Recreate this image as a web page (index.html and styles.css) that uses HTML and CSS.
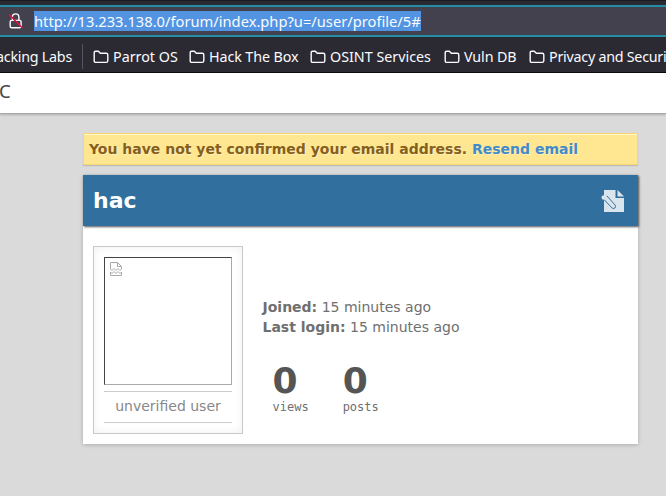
FILE: index.html
```
<!DOCTYPE html>
<html lang="en">
<head>
<meta charset="utf-8">
<title>hac</title>
<link rel="stylesheet" href="styles.css">
</head>
<body>
<svg width="0" height="0" class="defs"><symbol id="folder" viewBox="0 0 16 14"><path d="M1.2 10.8V2.7Q1.2 1.2 2.7 1.2H5.3L7.3 3.2H13.2Q14.8 3.2 14.8 4.7V10.8Q14.8 12.4 13.2 12.4H2.7Q1.2 12.4 1.2 10.8Z" fill="none" stroke="currentColor" stroke-width="1.4"/></symbol></svg>
<header class="browser">
  <div class="urlbar">
    <svg class="lock" width="16" height="18" viewBox="0 0 16 18"><path d="M4.3 8V5.2a3.3 3.3 0 0 1 6.6 0V8M2.2 14.2V9.8Q2.2 8.4 3.6 8.4H11.7Q13.1 8.4 13.1 9.8V14.2Q13.1 15.7 11.7 15.7H3.6Q2.2 15.7 2.2 14.2Z" fill="none" stroke="#fbfbfe" stroke-width="1.4"/><path d="M1.2 2.6L14.4 16" stroke="#e2123f" stroke-width="1.5"/></svg>
    <span class="url">http://13.233.138.0/forum/index.php?u=/user/profile/5#</span>
  </div>
  <nav class="bookmarks">
    <span class="cut"><span>acking Labs</span></span>
    <i class="sep"></i>
    <span class="mark m1"><svg><use href="#folder"/></svg>Parrot OS</span>
    <span class="mark m2"><svg><use href="#folder"/></svg>Hack The Box</span>
    <span class="mark m3"><svg><use href="#folder"/></svg>OSINT Services</span>
    <span class="mark m4"><svg><use href="#folder"/></svg>Vuln DB</span>
    <span class="mark m5"><svg><use href="#folder"/></svg>Privacy and Securi</span>
  </nav>
</header>
<div class="site-bar">C</div>
<main>
  <div class="notice">You have not yet confirmed your email address. <a>Resend email</a></div>
  <section class="profile">
    <div class="title"><h1>hac</h1>
      <svg width="22" height="22" viewBox="0 0 22 22" overflow="visible"><path d="M2 0H13.5V8H22V22H2Z" fill="#d9e4ed"/><path d="M15.5 0V6.5H22Z" fill="#d9e4ed"/><path d="M1.5 9L9.8 17.8Q11.5 19.4 13 18Q14.2 16.4 12.9 14.8L4.8 5.8" fill="#d9e4ed" stroke="#31709e" stroke-width="1"/><circle cx="1.8" cy="7.5" r="2.3" fill="#d9e4ed"/></svg>
    </div>
    <div class="content">
      <div class="card">
        <div class="avatar"><svg width="12" height="14" viewBox="0 0 12 14" fill="none" stroke="#aaa"><path d="M.5 7V.5H7.5L11.5 4.5V7M7.5 .5V4.5H11.5M.5 7L2 8.5L4 6.5L6 8.5L8 6.5L10 8.5L11.5 7M.5 13.5V10L2 11.5L4 9.5L6 11.5L8 9.5L10 11.5L11.5 10V13.5Z"/></svg></div>
        <div class="rank">unverified user</div>
      </div>
      <div class="info">
        <div><b>Joined:</b> 15 minutes ago</div>
        <div><b>Last login:</b> 15 minutes ago</div>
        <div class="stats">
          <div><strong>0</strong><span>views</span></div>
          <div><strong>0</strong><span>posts</span></div>
        </div>
      </div>
    </div>
  </section>
</main>
</body>
</html>
```
FILE: styles.css
```
* { box-sizing: border-box; }
body { margin: 0; height: 496px; overflow: hidden; background: #dadada; font: 14px/20px "DejaVu Sans", sans-serif; color: #6f6f6f; }
.defs { display: none; }
.browser { height: 73px; padding-top: 4px; background: #2b2a33; border-top: 1px solid #1c1b22; border-bottom: 1px solid #0c0c0d; font-family: "Noto Sans", sans-serif; color: #fbfbfe; }
.urlbar { height: 32px; display: flex; align-items: center; padding-left: 8px; background: #42414d; border: solid #238ea5; border-width: 2px 0; }
.url { margin-left: 10px; height: 20px; line-height: 20px; background: #5294e2; font-size: 14.7px; white-space: nowrap; }
.bookmarks { height: 35px; padding-top: 5px; display: flex; align-items: center; font-size: 14.3px; white-space: nowrap; }
.cut { width: 72px; flex: none; display: flex; justify-content: flex-end; letter-spacing: -.25px; }
.sep { flex: none; width: 1px; height: 25px; margin: -2px 10px 0; background: #55545f; }
.mark { display: flex; align-items: center; flex: none; }
.mark svg { width: 16px; height: 14px; margin: -1px 4px 0 0; flex: none; }
.m1 { width: 96px; }
.m2 { width: 121px; letter-spacing: -.1px; }
.m3 { width: 134px; }
.m4 { width: 85px; letter-spacing: -.1px; }
.m5 { letter-spacing: -.25px; }
.site-bar { height: 41px; padding-top: 5px; background: #fff; border-bottom: 1px solid #a6aaa6; box-shadow: 0 1px 2px rgba(0,0,0,.2); font: 18.5px/26px "Noto Sans", sans-serif; color: #444; text-indent: -1px; }
main { width: 555px; margin: 19px 0 0 83px; }
.notice { height: 32px; padding: 5px; border: 1px solid #f7d76e; background: #ffe691; box-shadow: inset 0 1px 0 #fff5cf, 0 1px 1px rgba(0,0,0,.13); font-weight: bold; color: #85601b; text-shadow: 1px 1px 0 #fff0bd; white-space: nowrap; }
.notice a { color: #428bca; }
.profile { margin-top: 10px; height: 269px; background: #fff; box-shadow: 0 1px 4px rgba(0,0,0,.2); }
.title { height: 51px; padding: 0 14px 0 10px; display: flex; align-items: center; justify-content: space-between; background: #31709e; box-shadow: 1px 1px 2px #555; color: #fff; }
h1 { margin: 0; font-size: 22px; line-height: 28px; }
.content { display: flex; padding: 20px 10px; }
.card { width: 150px; height: 188px; padding: 10px; border: 1px solid #c9c9c9; box-shadow: inset 0 0 10px #f0f0f0; }
.avatar { height: 128px; padding: 4px 5px; border: 1px solid; border-color: #444 #aaa #aaa #444; background: #fff; }
.avatar svg { display: block; }
.rank { margin-top: 6px; height: 32px; line-height: 29px; border: solid #ccc; border-width: 1px 0; text-align: center; color: #888; }
.info { padding: 51px 0 0 19.5px; }
.stats { display: flex; gap: 34px; padding: 24px 0 0 10px; }
.stats strong { display: block; height: 40px; font-size: 36px; line-height: 40px; color: #555; }
.stats span { display: block; font: 12px/13px "DejaVu Sans Mono", monospace; }
```
